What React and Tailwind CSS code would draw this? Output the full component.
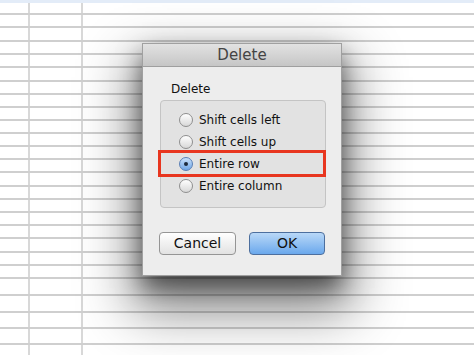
import React from 'react';

// row heights (incl. the 2px bottom rule) measured from the sheet
const ROWS = [
  'h-[12px]', 'h-[13px]', 'h-[14px]', 'h-[13px]', 'h-[13px]', 'h-[14px]', 'h-[13px]', 'h-[13px]',
  'h-[13px]', 'h-[13px]', 'h-[13px]', 'h-[13px]', 'h-[13px]', 'h-[14px]', 'h-[13px]', 'h-[13px]',
  'h-[13px]', 'h-[13px]', 'h-[14px]', 'h-[13px]', 'h-[13px]', 'h-[17px]', 'h-[17px]', 'h-[16px]',
  'h-[16px]', 'h-[14px]',
];

const OPTIONS = ['Shift cells left', 'Shift cells up', 'Entire row', 'Entire column'];

const Radio = ({ checked }) =>
  checked ? (
    <span className="w-[14px] h-[14px] rounded-full border border-[#5a7fb5] bg-gradient-to-b from-[#c9e1fa] to-[#6fa6e6] flex items-center justify-center shrink-0">
      <span className="w-[4px] h-[4px] rounded-full bg-[#1c2a3c]" />
    </span>
  ) : (
    <span className="w-[14px] h-[14px] rounded-full border border-[#8f8f8f] bg-gradient-to-b from-[#ffffff] to-[#d8d8d8] shrink-0" />
  );

const App = () => {
  return (
    <div className="relative w-[474px] h-[355px] overflow-hidden bg-white" style={{ fontFamily: '"DejaVu Sans", "Liberation Sans", sans-serif' }}>
      {/* spreadsheet background */}
      <div className="h-[3px] bg-[#e3ecf8]" />
      <div className="flex flex-col">
        {ROWS.map((h, i) => (
          <div key={i} className={`${h} flex border-b-2 border-[#cfcfcf]`}>
            <div className="w-[30px] border-r-2 border-[#d8d8d8]" />
            <div className="w-[53px] border-r-2 border-[#d8d8d8]" />
            <div className="flex-1" />
          </div>
        ))}
      </div>

      {/* Delete dialog */}
      <div className="absolute left-[142px] top-[43px] w-[200px] h-[233px] bg-[#ededed] border border-[#a0a0a0] shadow-[0_12px_22px_0_rgba(0,0,0,0.5),0_26px_50px_10px_rgba(0,0,0,0.45)] flex flex-col">
        <div className="h-[23px] bg-gradient-to-b from-[#e2e2e2] to-[#c6c6c6] border-b border-[#9f9f9f] flex items-center justify-center">
          <span className="text-[15px] text-[#444444]">Delete</span>
        </div>

        <div className="flex-1 relative pt-[15px]">
          <div className="pl-[28px] text-[12px] leading-[14px] text-[#111111]">Delete</div>
          <div className="mt-[4px] ml-[17px] w-[166px] h-[108px] rounded-[4px] border border-[#c4c4c4] bg-[#e2e2e2] pt-[8px] pl-[18px] flex flex-col">
            {OPTIONS.map((o, i) => (
              <div key={o} className="h-[22px] flex items-center gap-[6px]">
                <Radio checked={i === 2} />
                <span className="text-[12px] text-[#111111]">{o}</span>
              </div>
            ))}
          </div>

          {/* highlight */}
          <div className="absolute left-[15px] top-[83px] w-[168px] h-[27px] border-[3px] border-[#e8361f]" />

          <div className="mt-[24px] ml-[16px] flex gap-[13px]">
            <button className="w-[77px] h-[23px] rounded-[4px] border border-[#959595] bg-gradient-to-b from-[#ffffff] to-[#e2e2e2] text-[14px] text-[#111111] flex items-center justify-center">
              Cancel
            </button>
            <button className="w-[76px] h-[23px] rounded-[4px] border border-[#4d6f9e] bg-gradient-to-b from-[#b9d8f7] to-[#6aa8ec] text-[14px] text-[#111111] flex items-center justify-center">
              OK
            </button>
          </div>
        </div>
      </div>
    </div>
  );
};

export default App;
